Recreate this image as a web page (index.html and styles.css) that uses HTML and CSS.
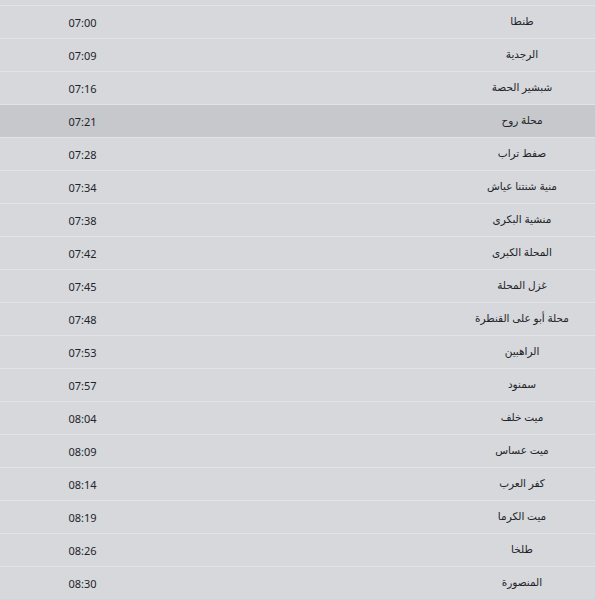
FILE: index.html
```html
<!DOCTYPE html>
<html lang="ar" dir="rtl">
<head>
<meta charset="utf-8">
<title>مواعيد القطار</title>
<link rel="stylesheet" href="styles.css">
</head>
<body>
<div class="schedule">
  <div class="row"><span class="station">طنطا</span><span class="gap"></span><span class="time">07:00</span></div>
  <div class="row"><span class="station">الرجدية</span><span class="gap"></span><span class="time">07:09</span></div>
  <div class="row"><span class="station">شبشير الحصة</span><span class="gap"></span><span class="time">07:16</span></div>
  <div class="row active"><span class="station">محلة روح</span><span class="gap"></span><span class="time">07:21</span></div>
  <div class="row"><span class="station">صفط تراب</span><span class="gap"></span><span class="time">07:28</span></div>
  <div class="row"><span class="station">منية شنتنا عياش</span><span class="gap"></span><span class="time">07:34</span></div>
  <div class="row"><span class="station">منشية البكرى</span><span class="gap"></span><span class="time">07:38</span></div>
  <div class="row"><span class="station">المحلة الكبرى</span><span class="gap"></span><span class="time">07:42</span></div>
  <div class="row"><span class="station">غزل المحلة</span><span class="gap"></span><span class="time">07:45</span></div>
  <div class="row"><span class="station">محلة أبو على القنطرة</span><span class="gap"></span><span class="time">07:48</span></div>
  <div class="row"><span class="station">الراهبين</span><span class="gap"></span><span class="time">07:53</span></div>
  <div class="row"><span class="station">سمنود</span><span class="gap"></span><span class="time">07:57</span></div>
  <div class="row"><span class="station">ميت خلف</span><span class="gap"></span><span class="time">08:04</span></div>
  <div class="row"><span class="station">ميت عساس</span><span class="gap"></span><span class="time">08:09</span></div>
  <div class="row"><span class="station">كفر العرب</span><span class="gap"></span><span class="time">08:14</span></div>
  <div class="row"><span class="station">ميت الكرما</span><span class="gap"></span><span class="time">08:19</span></div>
  <div class="row"><span class="station">طلخا</span><span class="gap"></span><span class="time">08:26</span></div>
  <div class="row"><span class="station">المنصورة</span><span class="gap"></span><span class="time">08:30</span></div>
</div>
</body>
</html>
```
FILE: styles.css
```css
html, body {
  margin: 0;
  padding: 0;
  background: #d7d8dc;
}
body {
  font-family: "Noto Sans", "DejaVu Sans", sans-serif;
  font-size: 12px;
  color: #212529;
}
.schedule {
  padding-top: 5px;
}
.row {
  display: grid;
  grid-template-columns: 146px 1fr 165px;
  height: 32px;
  align-items: center;
  border-top: 1px solid #e2e3e6;
}
.row.active {
  background: #c7c8cc;
}
.station, .time {
  text-align: center;
  white-space: nowrap;
}
.station {
  font-size: 10.5px;
  margin-top: -2px;
}
.time {
  font-size: 11px;
}
```
